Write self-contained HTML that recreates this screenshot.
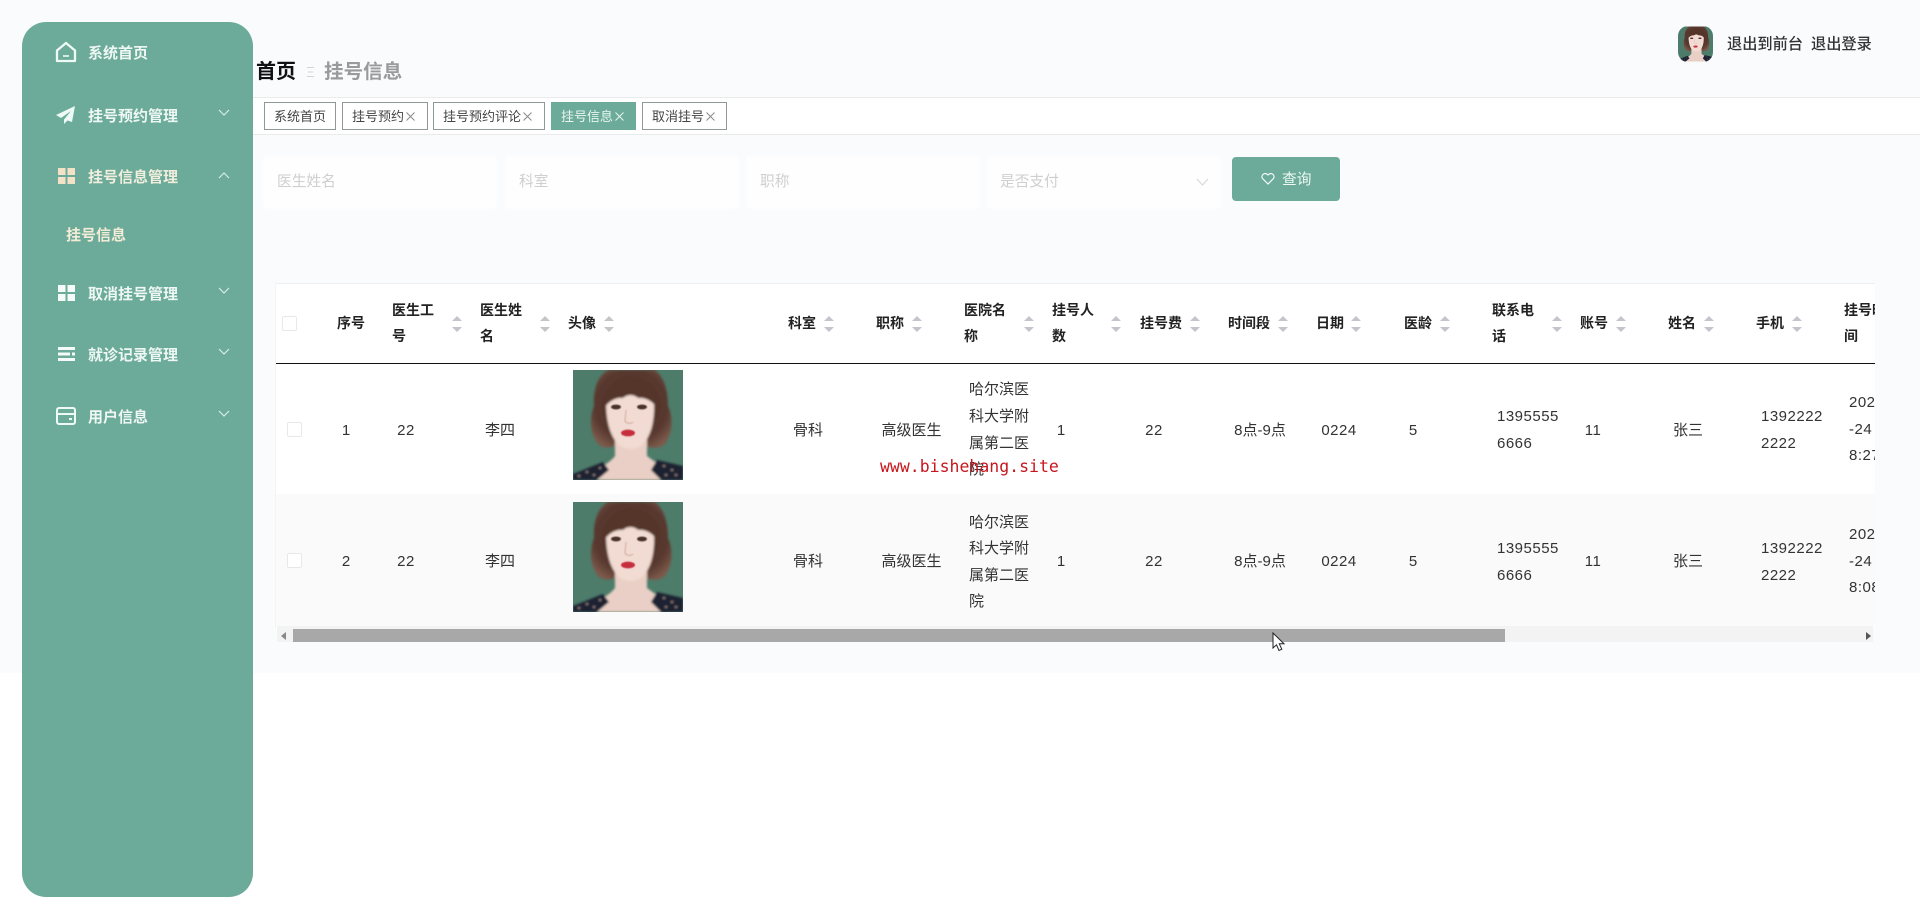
<!DOCTYPE html>
<html lang="zh"><head><meta charset="utf-8"><title>挂号信息</title>
<style>
*{box-sizing:border-box}
html,body{margin:0;padding:0}
body{width:1920px;height:916px;position:relative;overflow:hidden;background:#fff;font-family:"Liberation Sans","Noto Sans CJK SC",sans-serif;color:#333}
.a{position:absolute}
.m{position:absolute;left:88px;font-size:15px;font-weight:700;color:#eef7f3;line-height:20px;white-space:nowrap;margin-top:2px}
.ic{position:absolute}
.tag{position:absolute;top:102px;height:28px;border:1px solid #8f9a96;background:#fff;font-size:13px;line-height:28px;padding-left:9px;white-space:nowrap;color:#444}
.tag svg{margin-left:2px;vertical-align:.5px}
.box{position:absolute;top:157px;height:51px;width:232px;background:#fefefe;box-shadow:0 0 6px #fefefe}
.ph{position:absolute;top:172px;font-size:14.7px;line-height:20px;color:#cfcfcf;white-space:nowrap}
.h{position:absolute;font-size:14px;font-weight:700;color:#222;line-height:26px;white-space:nowrap}
.s{position:absolute;top:316px;width:10px;height:16px}
.c{position:absolute;transform:translate(-50%,-50%);font-size:15px;line-height:20px;color:#333;white-space:nowrap;margin-top:1px}
.n{letter-spacing:.5px}
.l{position:absolute;transform:translateY(-50%);font-size:15px;line-height:20px;color:#333;white-space:nowrap;margin-top:1px}
.cb{position:absolute;width:15px;height:15px;border:1px solid #e8e8e8;background:#fff;border-radius:2px}
</style></head>
<body>
<svg width="0" height="0" style="position:absolute">
<defs>
<filter id="b" x="-10%" y="-10%" width="120%" height="120%"><feGaussianBlur stdDeviation="1"/></filter>
<filter id="b3" x="-10%" y="-10%" width="120%" height="120%"><feGaussianBlur stdDeviation=".5"/></filter>
<radialGradient id="hg" cx="50%" cy="45%" r="62%"><stop offset="0" stop-color="#46291f"/><stop offset=".75" stop-color="#5a3a30"/><stop offset="1" stop-color="#7c5a4b"/></radialGradient>
<symbol id="face" viewBox="0 0 110 110">
<rect width="110" height="110" fill="#4d7c6a"/>
<g filter="url(#b)">
<path d="M35 0C24 6 20 20 21 36C16 48 17 66 26 75C32 79 38 78 44 75H72C78 79 86 79 92 74C100 64 100 46 95 36C95 18 90 6 82 0Z" fill="url(#hg)"/>
<path d="M42 68V86C36 94 22 100 12 110H104C94 100 82 92 74 86V68Z" fill="#e9cfc5"/>
<path d="M33 30C33 54 38 68 47 76C53 80 62 80 68 76C77 68 82 54 81 30C76 18 66 12 58 10C48 12 38 18 33 30Z" fill="#f1dbd2"/>
<path d="M31 38C33 22 44 10 58 6C72 10 82 22 84 38C79 30 71 27 65 28C61 24 54 24 50 28C43 27 36 31 31 38Z" fill="#55362c"/>
<path d="M0 104L30 92L36 100L24 110H0ZM110 96L84 90L78 100L88 110H110Z" fill="#1c2232"/>
<path d="M5 106h2M13 102h2M20 105h2M26 98h2M90 96h2M98 100h2M92 105h2M102 105h2" stroke="#b59a94" stroke-width="1.6"/>
</g>
<g filter="url(#b3)">
<ellipse cx="43" cy="37" rx="5" ry="2.4" fill="#4a332c"/>
<ellipse cx="69" cy="37" rx="5" ry="2.4" fill="#4a332c"/>
<path d="M53 40L52 51C54 54 58 54 60 52" stroke="#d8b4a8" stroke-width="1.2" fill="none"/>
<ellipse cx="55" cy="63" rx="7" ry="3.4" fill="#c62f3c"/>
</g>
</symbol>
<symbol id="sort" viewBox="0 0 10 16"><path d="M5 0L10 5H0Z M5 16L0 11H10Z" fill="#c3c5ca"/></symbol>
</defs>
</svg>

<div class="a" style="left:0;top:0;width:1920px;height:673px;background:#fafbfd"></div>
<div class="a" style="left:253px;top:97px;width:1667px;height:38px;background:#fff;border-top:1px solid #ebebee;border-bottom:1px solid #e8eaec"></div>

<!-- sidebar -->
<div class="a" style="left:22px;top:22px;width:231px;height:875px;background:#6cab99;border-radius:24px"></div>
<svg class="ic" style="left:55px;top:41px" width="22" height="22" viewBox="0 0 22 22" fill="none" stroke="#eefaf5" stroke-width="2.3"><path d="M2 9.500L11 2L20 9.500V20H2Z" stroke-linejoin="round"/><path d="M8 15H14" stroke-width="1.600"/></svg>
<div class="m" style="top:42px">系统首页</div>
<svg class="ic" style="left:56px;top:106px" width="19" height="18" viewBox="0 0 19 18"><path d="M19 0L0 9L5 12L15 5L8 13.500V18L11.500 14.500L16 16Z" fill="#eefaf5"/></svg>
<div class="m" style="top:105px">挂号预约管理</div>
<svg class="ic" style="left:218px;top:109px" width="12" height="8" viewBox="0 0 12 8" fill="none" stroke="#d5eee5" stroke-width="1.200"><path d="M1 1L6 6L11 1"/></svg>
<svg class="ic" style="left:58px;top:168px" width="17" height="16" viewBox="0 0 17 16" fill="#f3e1c8"><rect width="7.500" height="7"/><rect x="9.500" width="7.500" height="7"/><rect y="9" width="7.500" height="7"/><rect x="9.500" y="9" width="7.500" height="7"/></svg>
<div class="m" style="top:166px;color:#f1eedd">挂号信息管理</div>
<svg class="ic" style="left:218px;top:171px" width="12" height="8" viewBox="0 0 12 8" fill="none" stroke="#d5eee5" stroke-width="1.200"><path d="M1 7L6 2L11 7"/></svg>
<div class="m" style="left:66px;top:224px;color:#f3ecd6">挂号信息</div>
<svg class="ic" style="left:58px;top:285px" width="17" height="16" viewBox="0 0 17 16" fill="#f4fbf8"><rect width="7.500" height="7"/><rect x="9.500" width="7.500" height="7"/><rect y="9" width="7.500" height="7"/><rect x="9.500" y="9" width="7.500" height="7"/></svg>
<div class="m" style="top:283px">取消挂号管理</div>
<svg class="ic" style="left:218px;top:287px" width="12" height="8" viewBox="0 0 12 8" fill="none" stroke="#d5eee5" stroke-width="1.200"><path d="M1 1L6 6L11 1"/></svg>
<svg class="ic" style="left:58px;top:347px" width="17" height="14" viewBox="0 0 17 14" fill="#f4fbf8"><rect width="17" height="3"/><rect y="5.500" width="12" height="3"/><rect x="14" y="5.500" width="3" height="3"/><rect y="11" width="17" height="3"/></svg>
<div class="m" style="top:344px">就诊记录管理</div>
<svg class="ic" style="left:218px;top:348px" width="12" height="8" viewBox="0 0 12 8" fill="none" stroke="#d5eee5" stroke-width="1.200"><path d="M1 1L6 6L11 1"/></svg>
<svg class="ic" style="left:56px;top:407px" width="20" height="18" viewBox="0 0 20 18" fill="none" stroke="#eefaf5" stroke-width="2"><rect x="1" y="1" width="18" height="16" rx="2"/><path d="M1 7H19M13 12H16"/></svg>
<div class="m" style="top:406px">用户信息</div>
<svg class="ic" style="left:218px;top:410px" width="12" height="8" viewBox="0 0 12 8" fill="none" stroke="#d5eee5" stroke-width="1.200"><path d="M1 1L6 6L11 1"/></svg>

<!-- top -->
<svg class="a" style="left:1678px;top:26px;border-radius:10px" width="35" height="36"><use href="#face" width="35" height="36"/></svg>
<div class="a" style="left:1727px;top:34px;font-size:15.2px;line-height:22px;color:#333;font-weight:500;white-space:nowrap">退出到前台</div>
<div class="a" style="left:1811px;top:34px;font-size:15.2px;line-height:22px;color:#333;font-weight:500;white-space:nowrap">退出登录</div>
<div class="a" style="left:256px;top:58px;font-size:20px;line-height:28px;font-weight:700;color:#111;white-space:nowrap">首页</div>
<svg class="a" style="left:306px;top:66px" width="9" height="12" viewBox="0 0 9 12" stroke="#d4d6d6" stroke-width="1"><path d="M1 1.500H8M2 6H7M1 10.500H8"/></svg>
<div class="a" style="left:324px;top:58px;font-size:19.6px;line-height:28px;font-weight:700;color:#9a9a9a;white-space:nowrap">挂号信息</div>

<!-- tabs -->
<div class="tag" style="left:264px;width:72px">系统首页</div>
<div class="tag" style="left:342px;width:86px">挂号预约<svg width="9" height="9" viewBox="0 0 9 9" stroke="#8a8a8a" stroke-width="1"><path d="M.5.500L8.500 8.500M8.500.500L.5 8.500"/></svg></div>
<div class="tag" style="left:433px;width:112px">挂号预约评论<svg width="9" height="9" viewBox="0 0 9 9" stroke="#8a8a8a" stroke-width="1"><path d="M.5.500L8.500 8.500M8.500.500L.5 8.500"/></svg></div>
<div class="tag" style="left:551px;width:85px;background:#6cab99;border-color:#6cab99;color:#e8f6f0">挂号信息<svg width="9" height="9" viewBox="0 0 9 9" stroke="#e8f6f0" stroke-width="1"><path d="M.5.500L8.500 8.500M8.500.500L.5 8.500"/></svg></div>
<div class="tag" style="left:642px;width:85px">取消挂号<svg width="9" height="9" viewBox="0 0 9 9" stroke="#8a8a8a" stroke-width="1"><path d="M.5.500L8.500 8.500M8.500.500L.5 8.500"/></svg></div>

<!-- filters -->
<div class="box" style="left:264px"></div><div class="box" style="left:506px"></div><div class="box" style="left:747px"></div><div class="box" style="left:988px"></div>
<div class="ph" style="left:277px">医生姓名</div>
<div class="ph" style="left:519px">科室</div>
<div class="ph" style="left:760px">职称</div>
<div class="ph" style="left:1000px">是否支付</div>
<svg class="a" style="left:1196px;top:178px" width="13" height="8" viewBox="0 0 13 8" fill="none" stroke="#d4d4d4" stroke-width="1"><path d="M1 1L6.500 7L12 1"/></svg>
<div class="a" style="left:1232px;top:157px;width:108px;height:44px;background:#6cab99;border-radius:4px"></div>
<svg class="a" style="left:1261px;top:172px" width="14" height="13" viewBox="0 0 14 13" fill="none" stroke="#f2fbf7" stroke-width="1.200"><path d="M7 12L1.500 6.500C-.5 3.500 3.500-.5 7 3C10.500-.5 14.500 3.500 12.500 6.500Z"/></svg>
<div class="a" style="left:1282px;top:170px;font-size:14.7px;line-height:20px;color:#eef9f4;white-space:nowrap">查询</div>

<!-- table -->
<div class="a" style="left:275px;top:283px;width:1600px;height:345px;background:#fff;border-top:1px solid #eeeff1;border-left:1px solid #f3f4f5"></div>
<div class="a" style="left:276px;top:363px;width:1599px;height:1px;background:#111"></div>
<div class="a" style="left:276px;top:494px;width:1599px;height:132px;background:#fafafa"></div>

<div class="cb" style="left:282px;top:316px"></div>
<div class="h" style="left:337px;top:310px">序号</div>
<div class="h" style="left:392px;top:297px;white-space:normal;width:44px">医生工号</div>
<svg class="s" style="left:452px"><use href="#sort"/></svg>
<div class="h" style="left:480px;top:297px;white-space:normal;width:44px">医生姓名</div>
<svg class="s" style="left:540px"><use href="#sort"/></svg>
<div class="h" style="left:568px;top:310px">头像</div>
<svg class="s" style="left:604px"><use href="#sort"/></svg>
<div class="h" style="left:788px;top:310px">科室</div>
<svg class="s" style="left:824px"><use href="#sort"/></svg>
<div class="h" style="left:876px;top:310px">职称</div>
<svg class="s" style="left:912px"><use href="#sort"/></svg>
<div class="h" style="left:964px;top:297px;white-space:normal;width:44px">医院名称</div>
<svg class="s" style="left:1024px"><use href="#sort"/></svg>
<div class="h" style="left:1052px;top:297px;white-space:normal;width:44px">挂号人数</div>
<svg class="s" style="left:1111px"><use href="#sort"/></svg>
<div class="h" style="left:1140px;top:310px">挂号费</div>
<svg class="s" style="left:1190px"><use href="#sort"/></svg>
<div class="h" style="left:1228px;top:310px">时间段</div>
<svg class="s" style="left:1278px"><use href="#sort"/></svg>
<div class="h" style="left:1316px;top:310px">日期</div>
<svg class="s" style="left:1351px"><use href="#sort"/></svg>
<div class="h" style="left:1404px;top:310px">医龄</div>
<svg class="s" style="left:1440px"><use href="#sort"/></svg>
<div class="h" style="left:1492px;top:297px;white-space:normal;width:44px">联系电话</div>
<svg class="s" style="left:1552px"><use href="#sort"/></svg>
<div class="h" style="left:1580px;top:310px">账号</div>
<svg class="s" style="left:1616px"><use href="#sort"/></svg>
<div class="h" style="left:1668px;top:310px">姓名</div>
<svg class="s" style="left:1704px"><use href="#sort"/></svg>
<div class="h" style="left:1756px;top:310px">手机</div>
<svg class="s" style="left:1792px"><use href="#sort"/></svg>
<div class="a" style="left:1844px;top:297px;width:31px;height:52px;overflow:hidden"><div class="h" style="left:0;top:0;width:44px;white-space:normal">挂号时间</div></div>

<!-- row 1 -->
<div class="cb" style="left:287px;top:422px"></div>
<div class="c" style="left:346px;top:430px">1</div>
<div class="c n" style="left:406px;top:430px">22</div>
<div class="c" style="left:500px;top:430px">李四</div>
<svg class="a" style="left:573px;top:370px" width="110" height="110"><use href="#face" width="110" height="110"/></svg>
<div class="c" style="left:808px;top:430px">骨科</div>
<div class="c" style="left:911.500px;top:430px">高级医生</div>
<div class="l" style="left:969px;top:389px">哈尔滨医</div>
<div class="l" style="left:969px;top:416px">科大学附</div>
<div class="l" style="left:969px;top:442.500px">属第二医</div>
<div class="l" style="left:969px;top:469px">院</div>
<div class="c" style="left:1061px;top:430px">1</div>
<div class="c n" style="left:1154px;top:430px">22</div>
<div class="c" style="left:1260px;top:430px">8点-9点</div>
<div class="c n" style="left:1339px;top:430px">0224</div>
<div class="c" style="left:1413px;top:430px">5</div>
<div class="l n" style="left:1497px;top:416px">1395555</div>
<div class="l n" style="left:1497px;top:442.500px">6666</div>
<div class="c n" style="left:1593px;top:430px">11</div>
<div class="c" style="left:1688px;top:430px">张三</div>
<div class="l n" style="left:1761px;top:416px">1392222</div>
<div class="l n" style="left:1761px;top:442.500px">2222</div>
<div class="a" style="left:1849px;top:390px;width:26px;height:80px;overflow:hidden;font-size:15px;line-height:26.500px;letter-spacing:.5px;white-space:nowrap">2024<br>-24<br>8:27</div>

<!-- row 2 -->
<div class="cb" style="left:287px;top:553px"></div>
<div class="c" style="left:346px;top:561px">2</div>
<div class="c n" style="left:406px;top:561px">22</div>
<div class="c" style="left:500px;top:561px">李四</div>
<svg class="a" style="left:573px;top:502px" width="110" height="110"><use href="#face" width="110" height="110"/></svg>
<div class="c" style="left:808px;top:561px">骨科</div>
<div class="c" style="left:911.500px;top:561px">高级医生</div>
<div class="l" style="left:969px;top:521.500px">哈尔滨医</div>
<div class="l" style="left:969px;top:547.500px">科大学附</div>
<div class="l" style="left:969px;top:574.500px">属第二医</div>
<div class="l" style="left:969px;top:600.500px">院</div>
<div class="c" style="left:1061px;top:561px">1</div>
<div class="c n" style="left:1154px;top:561px">22</div>
<div class="c" style="left:1260px;top:561px">8点-9点</div>
<div class="c n" style="left:1339px;top:561px">0224</div>
<div class="c" style="left:1413px;top:561px">5</div>
<div class="l n" style="left:1497px;top:547.500px">1395555</div>
<div class="l n" style="left:1497px;top:574.500px">6666</div>
<div class="c n" style="left:1593px;top:561px">11</div>
<div class="c" style="left:1688px;top:561px">张三</div>
<div class="l n" style="left:1761px;top:547.500px">1392222</div>
<div class="l n" style="left:1761px;top:574.500px">2222</div>
<div class="a" style="left:1849px;top:522px;width:26px;height:80px;overflow:hidden;font-size:15px;line-height:26.500px;letter-spacing:.5px;white-space:nowrap">2024<br>-24<br>8:08</div>

<!-- scrollbar -->
<div class="a" style="left:277px;top:626px;width:1596px;height:16px;background:#f3f3f3"></div>
<div class="a" style="left:293px;top:629px;width:1212px;height:13px;background:#a8a8a8"></div>
<svg class="a" style="left:281px;top:632px" width="5" height="8" viewBox="0 0 5 8"><path d="M5 0V8L0 4Z" fill="#888"/></svg>
<svg class="a" style="left:1866px;top:632px" width="5" height="8" viewBox="0 0 5 8"><path d="M0 0V8L5 4Z" fill="#555"/></svg>

<!-- watermark -->
<div class="a" style="left:880px;top:457px;font-family:'DejaVu Sans Mono','Liberation Mono',monospace;font-size:16.5px;line-height:20px;color:#c8161d;white-space:nowrap">www.bishehang.site</div>

<!-- cursor -->
<svg class="a" style="left:1272px;top:632px" width="14" height="21" viewBox="0 0 14 21"><path d="M1 1V16L4.500 12.800L7 18.500L9.800 17.300L7.300 11.800H12Z" fill="#fff" stroke="#222" stroke-width="1"/></svg>
</body></html>
